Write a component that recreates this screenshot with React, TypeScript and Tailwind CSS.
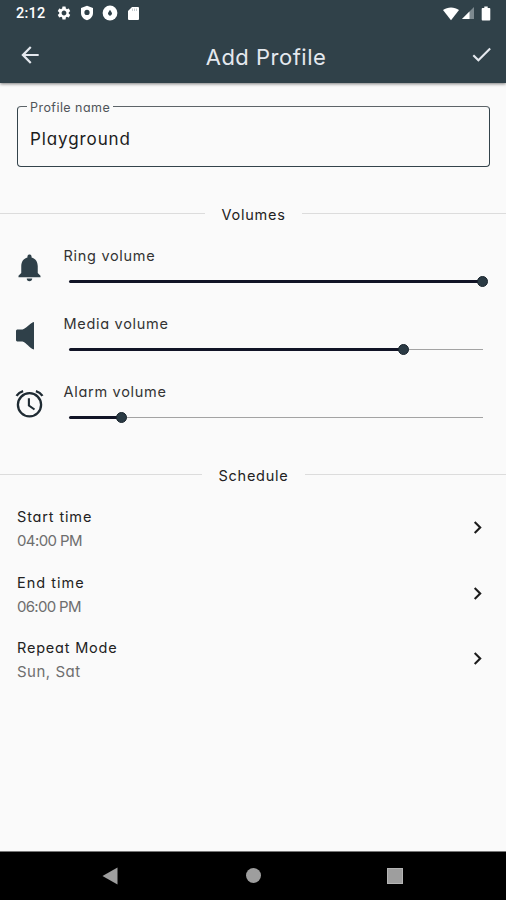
import React from 'react';
import { MdArrowBack, MdCheck, MdChevronRight, MdNotifications, MdSettings } from 'react-icons/md';

interface VolumeRowProps {
  label: string;
  value: number;
  icon: React.ReactNode;
}

const SpeakerIcon = () => (
  <svg viewBox="0 0 30 30" className="w-[30px] h-[30px] -translate-x-[1.5px]" fill="#2f4049">
    <path d="M2.5 9.5 L3.5 8.5 H9 C12 8 16.5 2 20.5 1 V28.5 C16.5 27.5 12 21 9 20.5 H3.5 L2.5 19.5 Z" />
  </svg>
);

const AlarmIcon = () => (
  <svg viewBox="0 0 30 30" className="w-[30px] h-[30px] -translate-x-[0.5px] -translate-y-[0.5px]" fill="none" stroke="#1f2b33" strokeWidth="2.3">
    <circle cx="15" cy="16.3" r="11.6" />
    <path d="M14.4 9.8 V17 L20 21" strokeWidth="2.1" />
    <path d="M2 7.4 Q4.5 3.8 8.6 2.6 M28 7.4 Q25.5 3.8 21.4 2.6" strokeWidth="2.4" />
  </svg>
);

const VolumeRow: React.FC<VolumeRowProps> = ({ label, value, icon }) => (
  <div className="flex h-[68px]">
    <div className="w-[59px] mr-px h-[41px] shrink-0 flex items-center justify-center">{icon}</div>
    <div className="flex-1 pl-[3.5px] pr-[23px]">
      <div className="text-[14.5px] leading-[18px] text-[#333] tracking-[0.7px]">{label}</div>
      <div className="ml-[5px] mt-[10.5px] h-3 flex items-center">
        <div className="h-[3.5px] rounded-l-full bg-[#111426]" style={{ width: `${value}%` }} />
        <div className="w-[11px] h-[11px] rounded-full bg-[#2a3a44] border border-[#17222b] shrink-0 -mx-[5.5px] z-10" />
        <div className="flex-1 h-[1.5px] bg-[#a3a3a3]" />
      </div>
    </div>
  </div>
);

const SectionTitle: React.FC<{ title: string; className: string }> = ({ title, className }) => (
  <div className="flex items-center h-5">
    <div className="flex-1 h-[1.5px] -mt-[3px] bg-[#dcdcdc]" />
    <div className={`text-center text-[14.5px] leading-5 text-[#222] ${className}`}>{title}</div>
    <div className="flex-1 h-[1.5px] -mt-[3px] bg-[#dcdcdc]" />
  </div>
);

const schedule = [
  { label: 'Start time', value: '04:00 PM', labelClass: 'tracking-[0.85px]', valueClass: 'tracking-[-0.6px]' },
  { label: 'End time', value: '06:00 PM', labelClass: 'tracking-[1px]', valueClass: 'tracking-[-0.7px]' },
  { label: 'Repeat Mode', value: 'Sun, Sat', labelClass: 'tracking-[0.8px]', valueClass: 'tracking-[0.5px]' },
];

export default function App() {
  return (
    <div className="w-[506px] h-[900px] flex flex-col overflow-hidden bg-[#fafafa] font-['Inter','Noto_Sans',sans-serif] [font-feature-settings:'cv11']">
      <header className="h-[83px] shrink-0 bg-[#304149] text-[#e4e8ee] shadow-[0_1px_3px_rgba(0,0,0,0.5)]">
        <div className="h-[26px] flex items-center justify-between pl-4 pr-[15px] text-white">
          <div className="flex items-center">
            <span className="w-[40px] text-[14.5px] leading-none pt-[2px] font-medium font-['Roboto',sans-serif] tracking-[0.2px]">2:12</span>
            <MdSettings size={16} />
            <svg viewBox="0 0 16 16" className="w-4 h-4 ml-[7px]" fill="#fff">
              <path fillRule="evenodd" d="M8 .8 L14 3 V8 C14 11.5 11.4 14.3 8 15.2 C4.6 14.3 2 11.5 2 8 V3 Z M8 4.8 A2.6 2.6 0 1 0 8 10 A2.6 2.6 0 1 0 8 4.8 Z" />
            </svg>
            <svg viewBox="0 0 16 16" className="w-4 h-4 ml-[7px]">
              <circle cx="8" cy="8" r="7.4" fill="#fff" />
              <path d="M8 4.8 L9.7 7.5 A2 2 0 1 1 6.3 7.5 Z" fill="#304149" />
            </svg>
            <svg viewBox="0 0 13 15" className="w-[13px] h-[15px] ml-[9px]" fill="#fff">
              <path d="M5 1 H11 Q12 1 12 2 V13 Q12 14 11 14 H2 Q1 14 1 13 V5 Z" />
              <path d="M5.5 2.5 V5 M7.5 2.5 V5 M9.5 2.5 V5" stroke="#b7c0c5" strokeWidth=".8" />
            </svg>
          </div>
          <div className="flex items-center">
            <svg viewBox="0 0 18 15" className="w-[18px] h-[15px]" fill="#fff">
              <path d="M9 14.3 L1 4 C5.5 .5 12.5 .5 17 4 Z" />
            </svg>
            <svg viewBox="0 0 14 14" className="w-[14px] h-[14px] ml-px">
              <path d="M13 1 V13 H1 Z" fill="#7d898f" />
              <path d="M8.5 5.5 V13 H1 Z" fill="#fff" />
            </svg>
            <svg viewBox="0 0 10 15" className="w-[10px] h-[15px] ml-[6px]" fill="#fff">
              <path d="M3.3 .5 H6.7 V2 H8.5 Q9.3 2 9.3 3 V13.5 Q9.3 14.5 8.5 14.5 H1.5 Q.7 14.5 .7 13.5 V3 Q.7 2 1.5 2 H3.3 Z" />
            </svg>
          </div>
        </div>
        <div className="h-[57px] flex items-center justify-between pl-[17px] pr-[12px]">
          <MdArrowBack size={26} />
          <h1 className="text-[22px] leading-none pt-[5px] pl-5 tracking-[0.5px]">Add Profile</h1>
          <MdCheck size={25} />
        </div>
      </header>

      <main className="flex-1">
        <div className="relative ml-[17px] mr-4 mt-[23px] h-[61px] rounded border-[1.5px] border-[#33434b] border-t-[#5d6468] flex items-center pl-3">
          <span className="absolute left-[9px] -top-[7px] px-[3px] w-[86px] whitespace-nowrap bg-[#fafafa] text-[12.5px] leading-4 text-[#4f5559] tracking-[0.45px]">
            Profile name
          </span>
          <span className="text-[17px] text-[#1c1c1c] pt-[6px] tracking-[0.9px]">Playground</span>
        </div>

        <div className="mt-[38px]">
          <SectionTitle title="Volumes" className="w-[97px] pl-px tracking-[0.75px]" />
        </div>

        <div className="mt-[22px]">
          <VolumeRow label="Ring volume" value={99.8} icon={<MdNotifications size={33} color="#2f4049" />} />
          <VolumeRow label="Media volume" value={80.8} icon={<SpeakerIcon />} />
          <VolumeRow label="Alarm volume" value={12.8} icon={<AlarmIcon />} />
        </div>

        <div className="mt-[15px]">
          <SectionTitle title="Schedule" className="w-[103px] pl-px tracking-[0.75px]" />
        </div>

        <div className="mt-[19px]">
          {schedule.map(item => (
            <div key={item.label} className="h-[65.6px] pl-[17px] pr-[15px] flex items-start justify-between">
              <div>
                <div className={`text-[14.5px] leading-6 text-[#222] ${item.labelClass}`}>{item.label}</div>
                <div className={`text-[15px] leading-[23px] text-[#6e6e6e] ${item.valueClass}`}>{item.value}</div>
              </div>
              <MdChevronRight size={25} color="#1c1c1c" className="mt-[10px] mr-[1px]" />
            </div>
          ))}
        </div>
      </main>

      <nav className="h-[49px] shrink-0 bg-black border-t border-[#777] flex items-center pl-[101px] pr-[103px] pb-px justify-between">
        <svg viewBox="0 0 18 18" className="w-[18px] h-[18px]" fill="#9e9e9e">
          <path d="M1.5 9 L16.5 .5 V17.5 Z" />
        </svg>
        <div className="w-[15px] h-[15px] rounded-full bg-[#9e9e9e]" />
        <div className="w-4 h-4 bg-[#9e9e9e] border border-[#b5b5b5]" />
      </nav>
    </div>
  );
}
